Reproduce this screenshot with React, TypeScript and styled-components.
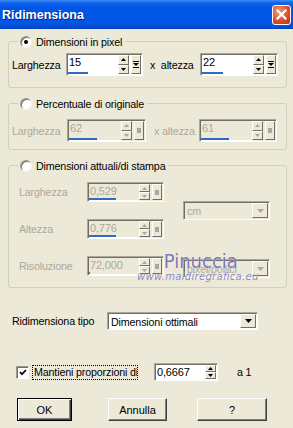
import React from 'react';
import styled, { createGlobalStyle } from 'styled-components';

const GlobalStyle = createGlobalStyle`
  html, body {
    margin: 0;
    padding: 0;
    background: #ece9d8;
  }
  body {
    font-family: "Liberation Sans", Arial, sans-serif;
    font-size: 10.7px;
    letter-spacing: -0.15px;
    color: #000;
  }
`;

const Dialog = styled.div`
  width: 293px;
  height: 428px;
  background: #ece9d8;
  display: flex;
  flex-direction: column;
  overflow: hidden;
`;

const TitleBar = styled.div`
  height: 29px;
  flex: none;
  box-sizing: border-box;
  padding: 0 2px;
  display: flex;
  align-items: center;
  justify-content: space-between;
  background: linear-gradient(
    to bottom,
    #3d8ef5 0%,
    #0f63ea 10%,
    #0055e5 25%,
    #0058e8 70%,
    #0450d8 90%,
    #003fb8 100%
  );
`;

const Title = styled.span`
  color: #fff;
  font-weight: bold;
  font-size: 12.5px;
  letter-spacing: 0;
  text-shadow: 1px 1px 0 #0a1e7a;
`;

const CloseButton = styled.div`
  width: 19px;
  height: 20px;
  box-sizing: border-box;
  border: 1px solid #fff;
  border-radius: 3px;
  background: radial-gradient(circle at 35% 30%, #f29a78, #dc4a22 60%, #b8321a);
  display: flex;
  align-items: center;
  justify-content: center;
`;

const Body = styled.div`
  flex: 1;
  display: flex;
  flex-direction: column;
  padding: 0 6px 0 8px;
`;

const GroupBox = styled.div<{ $mt: number; $pb: number }>`
  position: relative;
  margin-top: ${(p) => p.$mt}px;
  padding-bottom: ${(p) => p.$pb}px;
  border: 1px solid #d0d0bf;
  border-radius: 3px;
`;

const Legend = styled.div`
  display: flex;
  align-items: center;
  gap: 4px;
  height: 13px;
  width: fit-content;
  margin: -7px 0 0 9px;
  padding: 0 3px 0 2px;
  background: #ece9d8;
`;

const Radio = styled.span<{ $checked?: boolean }>`
  width: 12px;
  height: 12px;
  box-sizing: border-box;
  border-radius: 50%;
  border: 1px solid;
  border-color: #9a9a8c #f4f3ee #f4f3ee #9a9a8c;
  box-shadow: inset 1px 1px #716f64;
  background: #fff;
  display: flex;
  align-items: center;
  justify-content: center;

  &::after {
    content: '';
    width: 4px;
    height: 4px;
    border-radius: 50%;
    background: ${(p) => (p.$checked ? '#000' : 'transparent')};
  }
`;

const Row = styled.div<{ $mt: number; $pl: number }>`
  display: flex;
  align-items: center;
  margin-top: ${(p) => p.$mt}px;
  padding-left: ${(p) => p.$pl}px;
`;

const Label = styled.span<{ $w?: number; $pl?: number; $disabled?: boolean }>`
  flex: none;
  width: ${(p) => (p.$w ? `${p.$w}px` : 'auto')};
  padding-left: ${(p) => p.$pl ?? 0}px;
  box-sizing: border-box;
  white-space: nowrap;
  color: ${(p) => (p.$disabled ? '#aca899' : '#000')};
`;

const SunkenFrame = styled.div<{ $w: number; $h: number; $disabled?: boolean }>`
  flex: none;
  width: ${(p) => p.$w}px;
  height: ${(p) => p.$h}px;
  box-sizing: border-box;
  display: flex;
  padding: 1px 0 0 1px;
  border: 1px solid;
  border-color: #aca899 #fff #fff #aca899;
  box-shadow: inset 1px 1px #716f64;
  background: ${(p) => (p.$disabled ? '#ece9d8' : '#fff')};
`;

const Field = styled.div<{ $disabled?: boolean }>`
  flex: 1;
  min-width: 0;
  display: flex;
  flex-direction: column;
  justify-content: space-between;
  background: ${(p) => (p.$disabled ? '#ece9d8' : '#fff')};
  color: ${(p) => (p.$disabled ? '#aca899' : '#000')};
`;

const FieldText = styled.span`
  padding: 1px 0 0 1px;
  font-size: 11px;
  line-height: 13px;
  white-space: nowrap;
`;

const BarTrack = styled.div`
  height: 2px;
  border-bottom: 1px solid #fff;
`;

const Bar = styled.div<{ $w: number }>`
  width: ${(p) => p.$w}px;
  height: 2px;
  background: #316ac5;
`;

const SpinCol = styled.div`
  flex: none;
  width: 11px;
  display: flex;
  flex-direction: column;
  padding: 0 1px 1px 0;
`;

const RaisedButton = styled.div`
  box-sizing: border-box;
  background: #ece9d8;
  border: 1px solid;
  border-color: #fff #716f64 #716f64 #fff;
  display: flex;
  align-items: center;
  justify-content: center;
`;

const SpinButton = styled(RaisedButton)`
  flex: 1;
`;

const PopupButton = styled(RaisedButton)`
  flex: none;
  width: 10px;
  margin: 0 1px 1px 1px;
`;

const SelectFrame = styled(SunkenFrame)`
  padding: 1px 0 0 1px;
`;

const SelectText = styled.div<{ $disabled?: boolean }>`
  flex: 1;
  display: flex;
  align-items: center;
  padding-left: 2px;
  white-space: nowrap;
  overflow: hidden;
  color: ${(p) => (p.$disabled ? '#aca899' : '#000')};
`;

const SelectButton = styled(RaisedButton)`
  flex: none;
  width: 16px;
  margin: 0 1px 1px 0;
`;

const Grid = styled.div`
  display: grid;
  grid-template-columns: 68px 77px 87px;
  grid-template-rows: 20px 20px 20px;
  row-gap: 17px;
  align-items: center;
  margin-top: 10px;
  padding-left: 10px;
`;

const GridSelect = styled.div<{ $row: string; $mt?: number }>`
  grid-column: 3;
  grid-row: ${(p) => p.$row};
  margin: ${(p) => p.$mt ?? 0}px 0 0 19px;
`;

const Watermark = styled.div`
  position: absolute;
  left: 128px;
  top: 86px;
  display: flex;
  flex-direction: column;
  align-items: center;
  pointer-events: none;
`;

const WatermarkName = styled.span`
  font-family: "DejaVu Sans Condensed", "DejaVu Sans", sans-serif;
  font-size: 20px;
  line-height: 19px;
  letter-spacing: 0;
  color: rgba(96, 96, 172, 0.85);
  margin-left: 6px;
  text-shadow: 0 0 1px #fff;
`;

const WatermarkUrl = styled.span`
  font-family: "DejaVu Sans", sans-serif;
  font-style: italic;
  font-size: 10px;
  line-height: 11px;
  letter-spacing: 0.3px;
  color: rgba(112, 112, 180, 0.85);
  text-shadow: 0 0 1px #fff;
`;

const CheckBox = styled.span`
  flex: none;
  width: 13px;
  height: 13px;
  box-sizing: border-box;
  border: 1px solid;
  border-color: #9a9a8c #fff #fff #9a9a8c;
  box-shadow: inset 1px 1px #716f64;
  background: #fff;
  display: flex;
  align-items: center;
  justify-content: center;
  padding: 1px 0 0 1px;
`;

const FocusLabel = styled.span`
  flex: none;
  width: 106px;
  height: 15px;
  box-sizing: border-box;
  margin-left: 3px;
  padding-left: 1px;
  border: 1px dotted #000;
  line-height: 13px;
  white-space: nowrap;
  overflow: hidden;
`;

const ButtonRow = styled.div`
  display: flex;
  margin-top: 17px;
  padding-left: 9px;
`;

const PushButton = styled.button<{ $w: number; $ml: number; $default?: boolean }>`
  width: ${(p) => p.$w}px;
  height: 23px;
  margin-left: ${(p) => p.$ml}px;
  padding: 0;
  box-sizing: border-box;
  font-family: inherit;
  font-size: 11px;
  color: #000;
  background: #ece9d8;
  border: 1px solid;
  border-color: ${(p) => (p.$default ? '#000' : '#fff #404040 #404040 #fff')};
  box-shadow: ${(p) =>
    p.$default
      ? 'inset 1px 1px #fff, inset -1px -1px #404040, inset -2px -2px #808080'
      : 'inset -1px -1px #808080'};
`;

const Arrow = ({ up, color }: { up?: boolean; color: string }) => (
  <svg width="5" height="3" viewBox="0 0 5 3">
    <polygon points={up ? '2.5,0 5,3 0,3' : '0,0 5,0 2.5,3'} fill={color} />
  </svg>
);

const PopupIcon = ({ disabled }: { disabled?: boolean }) =>
  disabled ? (
    <svg width="4" height="5" viewBox="0 0 4 5">
      <rect width="4" height="5" fill="#aca899" />
    </svg>
  ) : (
    <svg width="6" height="7" viewBox="0 0 6 7">
      <rect x="0" y="0" width="6" height="1" fill="#000" />
      <polygon points="0,2 6,2 3,5" fill="#000" />
      <rect x="0" y="6" width="6" height="1" fill="#000" />
    </svg>
  );

interface SpinProps {
  value: string;
  w: number;
  h: number;
  bar?: number;
  popup?: boolean;
  disabled?: boolean;
}

const SpinBox = ({ value, w, h, bar, popup, disabled }: SpinProps) => {
  const arrow = disabled ? '#aca899' : '#000';
  return (
    <SunkenFrame $w={w} $h={h} $disabled={disabled}>
      <Field $disabled={disabled}>
        <FieldText>{value}</FieldText>
        {bar !== undefined && (
          <BarTrack>
            <Bar $w={bar} />
          </BarTrack>
        )}
      </Field>
      <SpinCol>
        <SpinButton>
          <Arrow up color={arrow} />
        </SpinButton>
        <SpinButton>
          <Arrow color={arrow} />
        </SpinButton>
      </SpinCol>
      {popup && (
        <PopupButton>
          <PopupIcon disabled={disabled} />
        </PopupButton>
      )}
    </SunkenFrame>
  );
};

const Select = ({ value, w, h, disabled }: { value: string; w: number; h: number; disabled?: boolean }) => (
  <SelectFrame $w={w} $h={h} $disabled={disabled}>
    <SelectText $disabled={disabled}>{value}</SelectText>
    <SelectButton>
      <svg width="7" height="4" viewBox="0 0 7 4">
        <polygon points="0,0 7,0 3.5,4" fill={disabled ? '#aca899' : '#000'} />
      </svg>
    </SelectButton>
  </SelectFrame>
);

const App = () => (
  <>
    <GlobalStyle />
    <Dialog>
      <TitleBar>
        <Title>Ridimensiona</Title>
        <CloseButton>
          <svg width="11" height="11" viewBox="0 0 11 11">
            <path d="M1.5 1.5 L9.5 9.5 M9.5 1.5 L1.5 9.5" stroke="#fff" strokeWidth="2.2" strokeLinecap="square" />
          </svg>
        </CloseButton>
      </TitleBar>

      <Body>
        <GroupBox $mt={12} $pb={11}>
          <Legend>
            <Radio $checked />
            <span>Dimensioni in pixel</span>
          </Legend>
          <Row $mt={5} $pl={3}>
            <Label $w={54}>Larghezza</Label>
            <SpinBox value="15" w={77} h={23} bar={20} popup />
            <Label $w={57} $pl={7}>x&nbsp;&nbsp;altezza</Label>
            <SpinBox value="22" w={78} h={23} bar={21} popup />
          </Row>
        </GroupBox>

        <GroupBox $mt={15} $pb={7}>
          <Legend>
            <Radio />
            <span>Percentuale di originale</span>
          </Legend>
          <Row $mt={9} $pl={3}>
            <Label $w={55} $disabled>Larghezza</Label>
            <SpinBox value="62" w={79} h={23} bar={28} popup disabled />
            <Label $w={53} $pl={8} $disabled>x altezza</Label>
            <SpinBox value="61" w={78} h={23} bar={28} popup disabled />
          </Row>
        </GroupBox>

        <GroupBox $mt={15} $pb={11}>
          <Legend>
            <Radio />
            <span>Dimensioni attuali/di stampa</span>
          </Legend>
          <Grid>
            <Label $disabled>Larghezza</Label>
            <SpinBox value="0,529" w={77} h={20} bar={27} popup disabled />
            <GridSelect $row="1 / span 2">
              <Select value="cm" w={87} h={19} disabled />
            </GridSelect>
            <Label $disabled>Altezza</Label>
            <SpinBox value="0,776" w={77} h={20} bar={27} popup disabled />
            <Label $disabled>Risoluzione</Label>
            <SpinBox value="72,000" w={77} h={20} bar={1} popup disabled />
            <GridSelect $row="3" $mt={5}>
              <Select value="pixel/pollici" w={87} h={19} disabled />
            </GridSelect>
          </Grid>
          <Watermark>
            <WatermarkName>Pinuccia</WatermarkName>
            <WatermarkUrl>www.maidiregrafica.eu</WatermarkUrl>
          </Watermark>
        </GroupBox>

        <Row $mt={24} $pl={4}>
          <Label $w={95}>Ridimensiona tipo</Label>
          <Select value="Dimensioni ottimali" w={151} h={18} />
        </Row>

        <Row $mt={33} $pl={8}>
          <CheckBox>
            <svg width="8" height="7" viewBox="0 0 8 7">
              <path d="M1 3 L3 5.2 L7 1" stroke="#000" strokeWidth="1.8" fill="none" />
            </svg>
          </CheckBox>
          <FocusLabel>Mantieni proporzioni di</FocusLabel>
          <Label $pl={16}>
            <SpinBox value="0,6667" w={64} h={18} />
          </Label>
          <Label $pl={19}>a 1</Label>
        </Row>

        <ButtonRow>
          <PushButton $w={55} $ml={0} $default>OK</PushButton>
          <PushButton $w={59} $ml={36}>Annulla</PushButton>
          <PushButton $w={70} $ml={30}>?</PushButton>
        </ButtonRow>
      </Body>
    </Dialog>
  </>
);

export default App;
